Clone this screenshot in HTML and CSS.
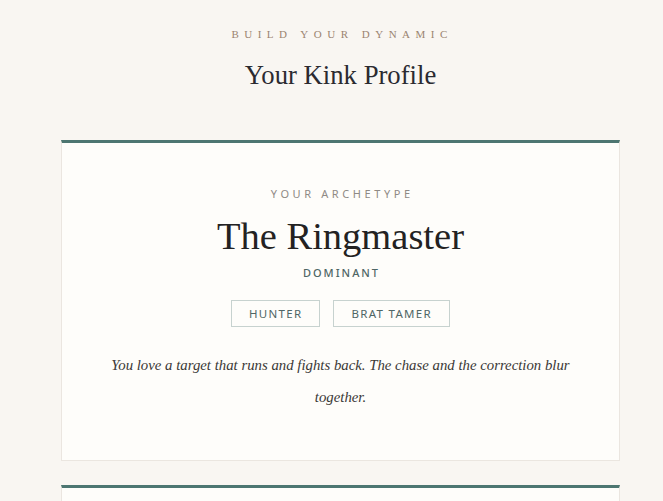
FILE: index.html
```html
<!DOCTYPE html>
<html lang="en">
<head>
<meta charset="utf-8">
<title>Your Kink Profile</title>
<link rel="stylesheet" href="styles.css">
</head>
<body>
<div class="page">
  <header class="intro">
    <p class="eyebrow">Build your dynamic</p>
    <h1 class="title">Your Kink Profile</h1>
  </header>
  <section class="card">
    <p class="label">Your archetype</p>
    <h2 class="archetype">The Ringmaster</h2>
    <p class="role">Dominant</p>
    <div class="tags">
      <span class="tag">Hunter</span>
      <span class="tag">Brat Tamer</span>
    </div>
    <p class="desc">You love a target that runs and fights back. The chase and the correction blur together.</p>
  </section>
  <section class="card card-next"></section>
</div>
</body>
</html>
```
FILE: styles.css
```css
* { box-sizing: border-box; }
html, body { margin: 0; padding: 0; }
body {
  background: #f9f6f2;
  font-family: "Liberation Serif", "Times New Roman", serif;
  color: #2b2a28;
  height: 501px;
  overflow: hidden;
}
.page {
  padding: 27px 43px 0 61px;
}
.intro { text-align: center; }
.eyebrow {
  margin: 0;
  font-size: 11px;
  letter-spacing: 0.5em;
  text-transform: uppercase;
  color: #9b8470;
  line-height: 14px;
  padding-left: 0.3em;
}
.title {
  margin: 18px 0 0;
  font-weight: 400;
  font-size: 26.7px;
  line-height: 32px;
  color: #2b2a30;
}
.card {
  margin-top: 49px;
  background: #fefdfa;
  border: 1px solid #ebe6e0;
  border-top: 3px solid #4d7671;
  text-align: center;
  padding: 44px 40px 47px;
}
.label {
  margin: 0;
  font-family: "Noto Sans", "Liberation Sans", sans-serif;
  font-size: 11px;
  line-height: 14px;
  letter-spacing: 3.6px;
  text-transform: uppercase;
  color: #8f8a85;
  padding-left: 3.6px;
}
.archetype {
  margin: 12px 0 0;
  font-weight: 400;
  font-size: 38.5px;
  line-height: 46px;
  color: #232222;
}
.role {
  margin: 7px 0 0;
  font-family: "Noto Sans", "Liberation Sans", sans-serif;
  font-size: 11px;
  line-height: 14px;
  letter-spacing: 2px;
  text-transform: uppercase;
  color: #4f6665;
  font-weight: 500;
  padding-left: 2px;
}
.tags {
  margin-top: 20px;
  display: flex;
  justify-content: center;
  gap: 13px;
}
.tag {
  display: inline-block;
  border: 1px solid #c7d2cf;
  padding: 6px 17px 5px;
  font-family: "Noto Sans", "Liberation Sans", sans-serif;
  font-size: 11.5px;
  line-height: 14px;
  letter-spacing: 1.3px;
  text-transform: uppercase;
  color: #4f6665;
}
.desc {
  margin: 22px 0 0;
  font-style: italic;
  font-size: 14.8px;
  line-height: 32px;
  color: #3a3836;
}
.card-next {
  margin-top: 24px;
  height: 40px;
  padding: 0;
}
```
